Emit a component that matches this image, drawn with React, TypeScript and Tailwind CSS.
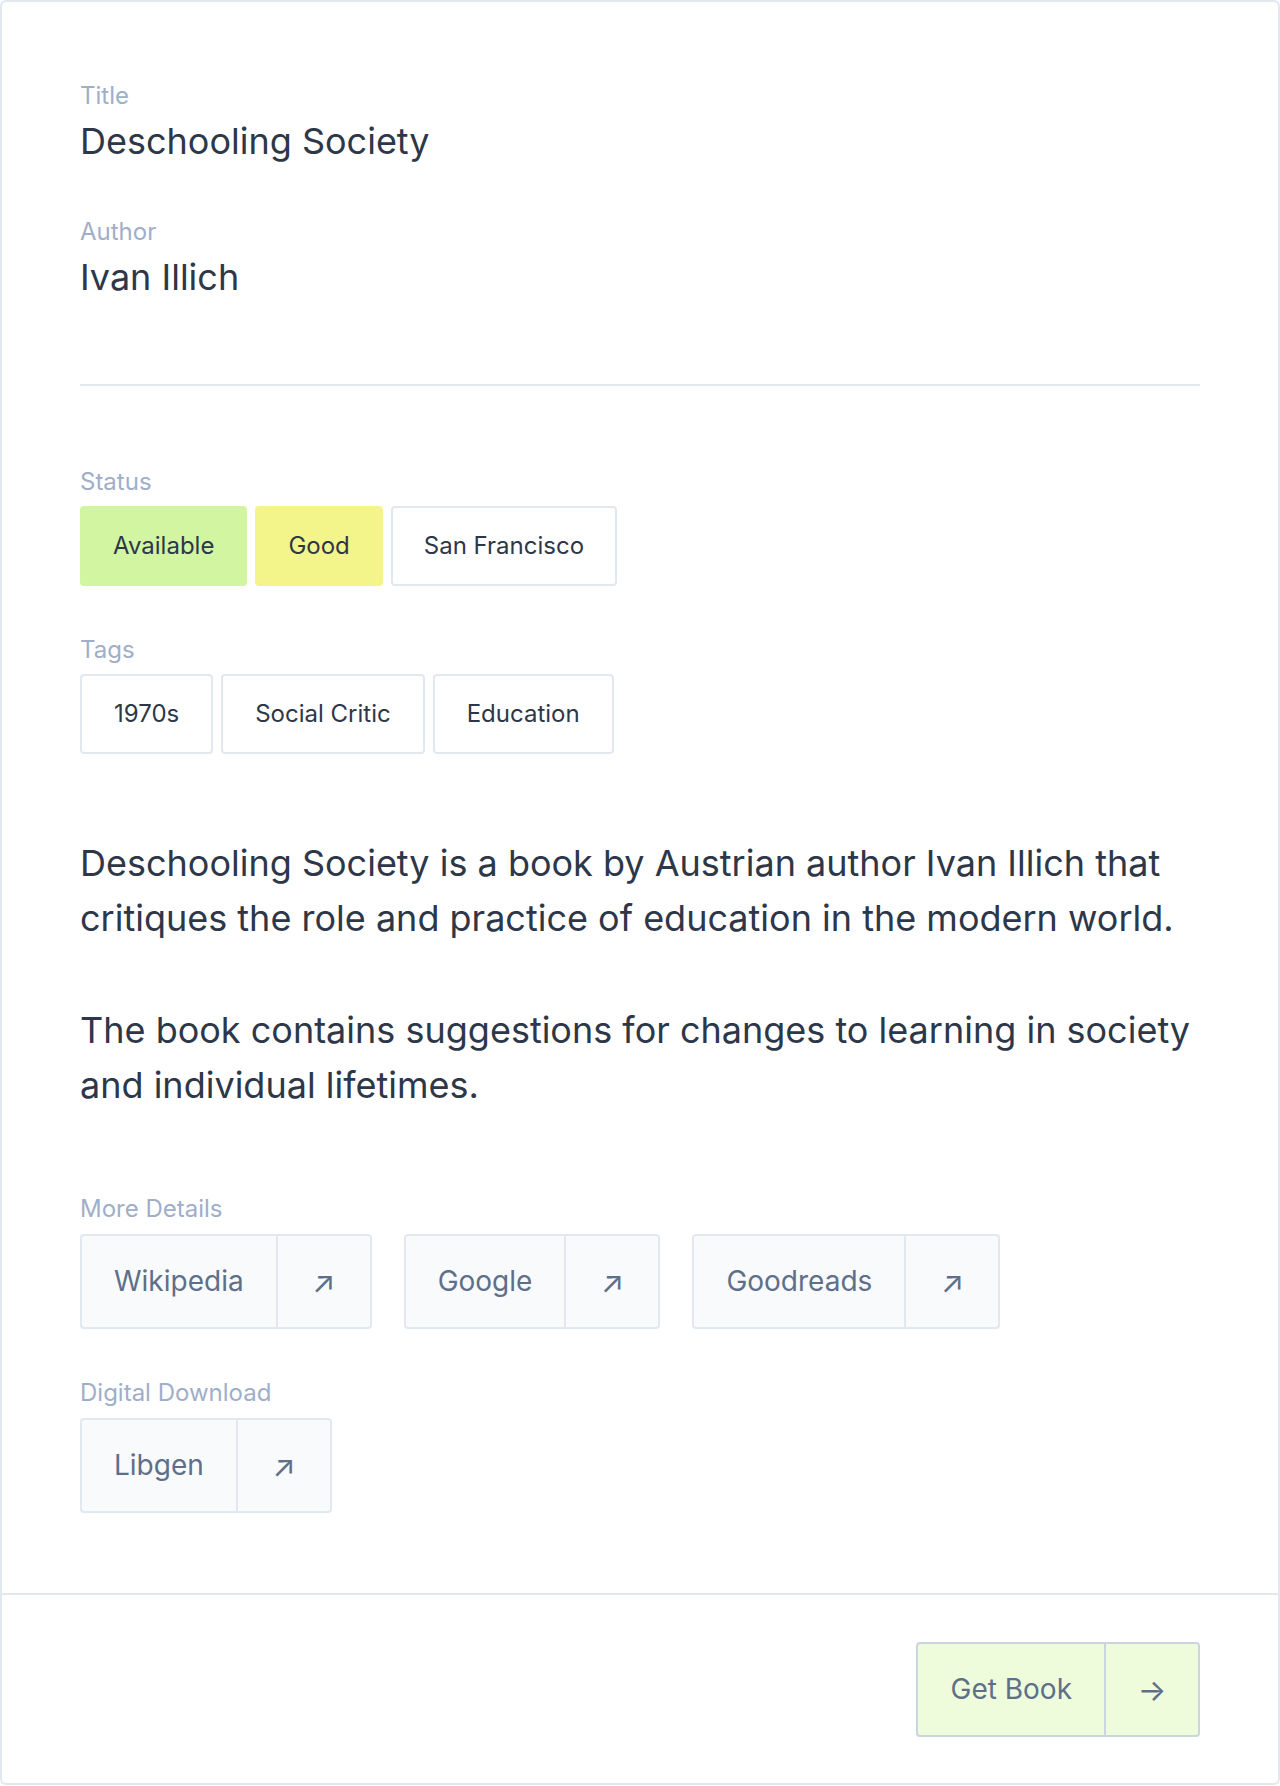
import React from 'react';

type Props = { children: React.ReactNode; className?: string };

const Label = ({ children, className = '' }: Props) => (
  <div className={`text-2xl leading-8 text-[#a0aec8] ${className}`}>{children}</div>
);

// status chips sit a touch tighter than the tag chips
const Chip = ({ children, className = '' }: Props) => (
  <span className={`inline-flex items-center py-[22px] border-2 rounded text-2xl leading-8 text-[#2d3748] ${className}`}>
    {children}
  </span>
);

const LinkButton = ({ label, arrow = '↗', className = '' }: { label: string; arrow?: string; className?: string }) => (
  <a href="#" className={`flex border-2 rounded text-[28px] leading-[35px] text-[#5f6f8a] ${className}`}>
    <span className="px-8 py-7">{label}</span>
    <span className="w-[94px] flex items-center justify-center border-l-2 border-inherit text-3xl">{arrow}</span>
  </a>
);

const App = () => {
  return (
    <div className="w-[1280px] min-h-[1786px] bg-white font-['Inter',sans-serif] text-[#2d3748]">
      <div className="border-2 border-[#e2e8f0] rounded-md">
        <div className="px-[78px] pt-[78px] pb-20">
          <Label>Title</Label>
          <div className="mt-[9px] text-4xl leading-10">Deschooling Society</div>

          <Label className="mt-[55px]">Author</Label>
          <div className="mt-[9px] text-4xl leading-10">Ivan Illich</div>

          <div className="mt-[87px] border-t-2 border-[#e2e8f0]"></div>

          <Label className="mt-20">Status</Label>
          <div className="mt-2 flex gap-2">
            <Chip className="px-[31px] bg-[#d1f5a1] border-[#d1f5a1]">Available</Chip>
            <Chip className="px-[31px] bg-[#f3f58b] border-[#f3f58b]">Good</Chip>
            <Chip className="px-[31px] bg-white border-[#e2e8f0]">San Francisco</Chip>
          </div>

          <Label className="mt-12">Tags</Label>
          <div className="mt-2 flex gap-2">
            <Chip className="px-8 bg-white border-[#e2e8f0]">1970s</Chip>
            <Chip className="px-8 bg-white border-[#e2e8f0]">Social Critic</Chip>
            <Chip className="px-8 bg-white border-[#e2e8f0]">Education</Chip>
          </div>

          <div className="mt-[82px] text-4xl leading-[55px]">
            <p>
              Deschooling Society is a book by Austrian author Ivan Illich that critiques the role and practice of
              education in the modern world.
            </p>
            <p className="mt-[57px]">
              The book contains suggestions for changes to learning in society and individual lifetimes.
            </p>
          </div>

          <Label className="mt-20">More Details</Label>
          <div className="mt-[9px] flex gap-8">
            <LinkButton label="Wikipedia" className="bg-[#f8fafc] border-[#e2e8f0]" />
            <LinkButton label="Google" className="bg-[#f8fafc] border-[#e2e8f0]" />
            <LinkButton label="Goodreads" className="bg-[#f8fafc] border-[#e2e8f0]" />
          </div>

          <Label className="mt-12">Digital Download</Label>
          <div className="mt-[9px] flex">
            <LinkButton label="Libgen" className="bg-[#f8fafc] border-[#e2e8f0]" />
          </div>
        </div>

        <div className="flex justify-end border-t-2 border-[#e2e8f0] px-[78px] pt-[47px] pb-[46px]">
          <LinkButton label="Get Book" arrow="→" className="bg-[#eefcdc] border-[#cbd5e1]" />
        </div>
      </div>
    </div>
  );
};

export default App;
